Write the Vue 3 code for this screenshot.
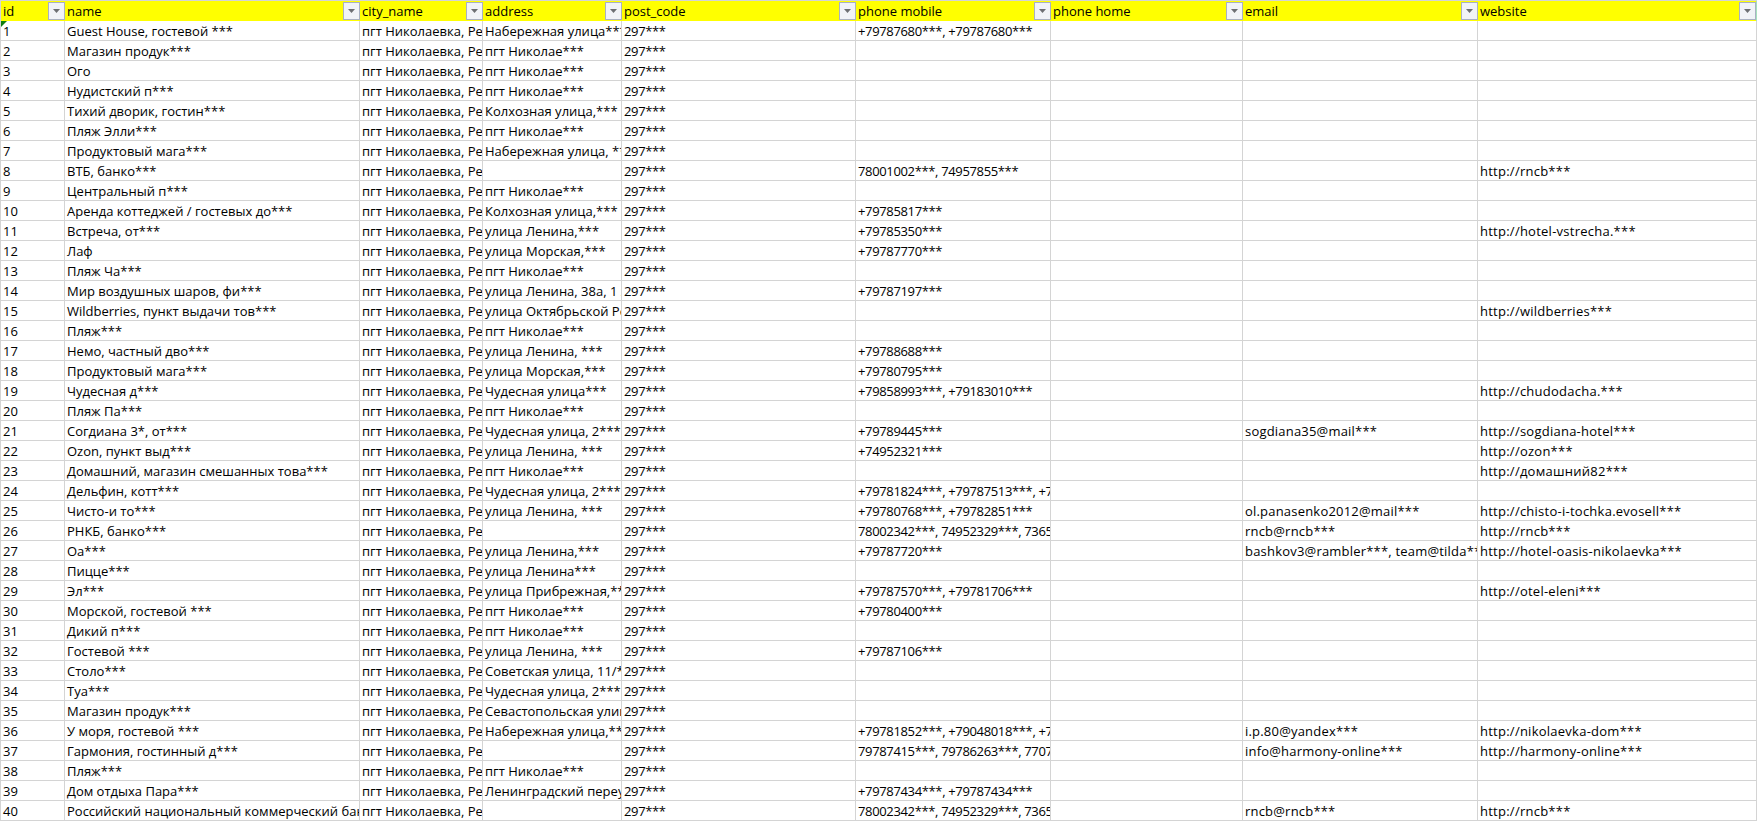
<script setup>
const columns = [
  { key: 'id', label: 'id' },
  { key: 'name', label: 'name' },
  { key: 'city', label: 'city_name' },
  { key: 'address', label: 'address' },
  { key: 'post', label: 'post_code' },
  { key: 'mobile', label: 'phone mobile' },
  { key: 'home', label: 'phone home' },
  { key: 'email', label: 'email' },
  { key: 'website', label: 'website' }
]

const city = 'пгт Николаевка, Республика Крым'
const post = '297***'
const pgt = 'пгт Николае***'
const lenin = 'улица Ленина, ***'
const rncbPhones = '78002342***, 74952329***, 7365***'

// name, address, mobile, email, website
const source = [
  ['Guest House, гостевой ***', 'Набережная улица***', '+79787680***, +79787680***', '', ''],
  ['Магазин продук***', pgt, '', '', ''],
  ['Ого', pgt, '', '', ''],
  ['Нудистский п***', pgt, '', '', ''],
  ['Тихий дворик, гостин***', 'Колхозная улица,***', '', '', ''],
  ['Пляж Элли***', pgt, '', '', ''],
  ['Продуктовый мага***', 'Набережная улица, ***', '', '', ''],
  ['ВТБ, банко***', '', '78001002***, 74957855***', '', 'http://rncb***'],
  ['Центральный п***', pgt, '', '', ''],
  ['Аренда коттеджей / гостевых до***', 'Колхозная улица,***', '+79785817***', '', ''],
  ['Встреча, от***', 'улица Ленина,***', '+79785350***', '', 'http://hotel-vstrecha.***'],
  ['Лаф', 'улица Морская,***', '+79787770***', '', ''],
  ['Пляж Ча***', pgt, '', '', ''],
  ['Мир воздушных шаров, фи***', 'улица Ленина, 38а, 1 этаж***', '+79787197***', '', ''],
  ['Wildberries, пункт выдачи тов***', 'улица Октябрьской Революции***', '', '', 'http://wildberries***'],
  ['Пляж***', pgt, '', '', ''],
  ['Немо, частный дво***', lenin, '+79788688***', '', ''],
  ['Продуктовый мага***', 'улица Морская,***', '+79780795***', '', ''],
  ['Чудесная д***', 'Чудесная улица***', '+79858993***, +79183010***', '', 'http://chudodacha.***'],
  ['Пляж Па***', pgt, '', '', ''],
  ['Согдиана 3*, от***', 'Чудесная улица, 2***', '+79789445***', 'sogdiana35@mail***', 'http://sogdiana-hotel***'],
  ['Ozon, пункт выд***', lenin, '+74952321***', '', 'http://ozon***'],
  ['Домашний, магазин смешанных това***', pgt, '', '', 'http://домашний82***'],
  ['Дельфин, котт***', 'Чудесная улица, 2***', '+79781824***, +79787513***, +7978***', '', ''],
  ['Чисто-и то***', lenin, '+79780768***, +79782851***', 'ol.panasenko2012@mail***', 'http://chisto-i-tochka.evosell***'],
  ['РНКБ, банко***', '', rncbPhones, 'rncb@rncb***', 'http://rncb***'],
  ['Оа***', 'улица Ленина,***', '+79787720***', 'bashkov3@rambler***, team@tilda***', 'http://hotel-oasis-nikolaevka***'],
  ['Пицце***', 'улица Ленина***', '', '', ''],
  ['Эл***', 'улица Прибрежная,***', '+79787570***, +79781706***', '', 'http://otel-eleni***'],
  ['Морской, гостевой ***', pgt, '+79780400***', '', ''],
  ['Дикий п***', pgt, '', '', ''],
  ['Гостевой ***', lenin, '+79787106***', '', ''],
  ['Столо***', 'Советская улица, 11/***', '', '', ''],
  ['Туа***', 'Чудесная улица, 2***', '', '', ''],
  ['Магазин продук***', 'Севастопольская улица***', '', '', ''],
  ['У моря, гостевой ***', 'Набережная улица,***', '+79781852***, +79048018***, +7978***', 'i.p.80@yandex***', 'http://nikolaevka-dom***'],
  ['Гармония, гостинный д***', '', '79787415***, 79786263***, 7707***', 'info@harmony-online***', 'http://harmony-online***'],
  ['Пляж***', pgt, '', '', ''],
  ['Дом отдыха Пара***', 'Ленинградский переулок***', '+79787434***, +79787434***', '', ''],
  ['Российский национальный коммерческий банк', '', rncbPhones, 'rncb@rncb***', 'http://rncb***']
]

const rows = source.map(([name, address, mobile, email, website], i) => ({
  id: i + 1,
  cells: [i + 1, name, city, address, post, mobile, '', email, website]
}))
</script>

<template>
  <table class="sheet">
    <colgroup>
      <col v-for="c in columns" :key="c.key" :class="'col-' + c.key" />
    </colgroup>
    <thead>
      <tr>
        <th v-for="c in columns" :key="c.key">
          <div class="head">
            <span class="label">{{ c.label }}</span>
            <span class="filter">
              <svg width="7" height="4" viewBox="0 0 7 4"><polygon points="0,0 7,0 3.5,4" fill="#6d6f73" /></svg>
            </span>
          </div>
        </th>
      </tr>
    </thead>
    <tbody>
      <tr v-for="row in rows" :key="row.id">
        <td v-for="(cell, i) in row.cells" :key="i" :class="'cell-' + columns[i].key">
          <span v-if="row.id === 1 && i === 0" class="marker"></span>{{ cell }}
        </td>
      </tr>
    </tbody>
  </table>
</template>

<style scoped>
.sheet {
  table-layout: fixed;
  width: 1757px;
  border-collapse: separate;
  border-spacing: 0;
  border-top: 1px solid #d4d4d4;
  border-left: 1px solid #d4d4d4;
  font-family: "Open Sans", "Noto Sans", sans-serif;
  font-size: 13px;
  color: #000;
  background: #fff;
}
.col-id { width: 64px; }
.col-name { width: 295px; }
.col-city { width: 123px; }
.col-address { width: 139px; }
.col-post { width: 234px; }
.col-mobile { width: 195px; }
.col-home { width: 192px; }
.col-email { width: 235px; }
.col-website { width: 279px; }

th {
  height: 20px;
  padding: 0;
  background: #ffff00;
  font-weight: 400;
  text-align: left;
}
th:last-child {
  border-right: 1px solid #a6e0bd;
}
.head {
  display: flex;
  align-items: flex-start;
  justify-content: space-between;
  height: 20px;
  padding: 1px 0 0 2px;
  box-sizing: border-box;
}
.label {
  padding-top: 1px;
  line-height: 17px;
  white-space: nowrap;
}
.filter {
  display: flex;
  align-items: center;
  justify-content: center;
  width: 17px;
  height: 18px;
  box-sizing: border-box;
  border: 1px solid #a9b1c2;
  background: #f1f3f7;
}
td {
  position: relative;
  height: 20px;
  box-sizing: border-box;
  padding: 2px 0 0 2px;
  border-right: 1px solid #d4d4d4;
  border-bottom: 1px solid #d4d4d4;
  line-height: 17px;
  white-space: nowrap;
  overflow: hidden;
}
.cell-post,
.cell-mobile {
  letter-spacing: -0.35px;
}
.cell-email {
  letter-spacing: 0.2px;
}
.cell-website {
  letter-spacing: 0.25px;
}
.marker {
  position: absolute;
  left: 0;
  top: 0;
  width: 6px;
  height: 6px;
  background: #107c10;
  clip-path: polygon(0 0, 100% 0, 0 100%);
}
</style>

<style>
html, body { background: #fff; }
</style>
